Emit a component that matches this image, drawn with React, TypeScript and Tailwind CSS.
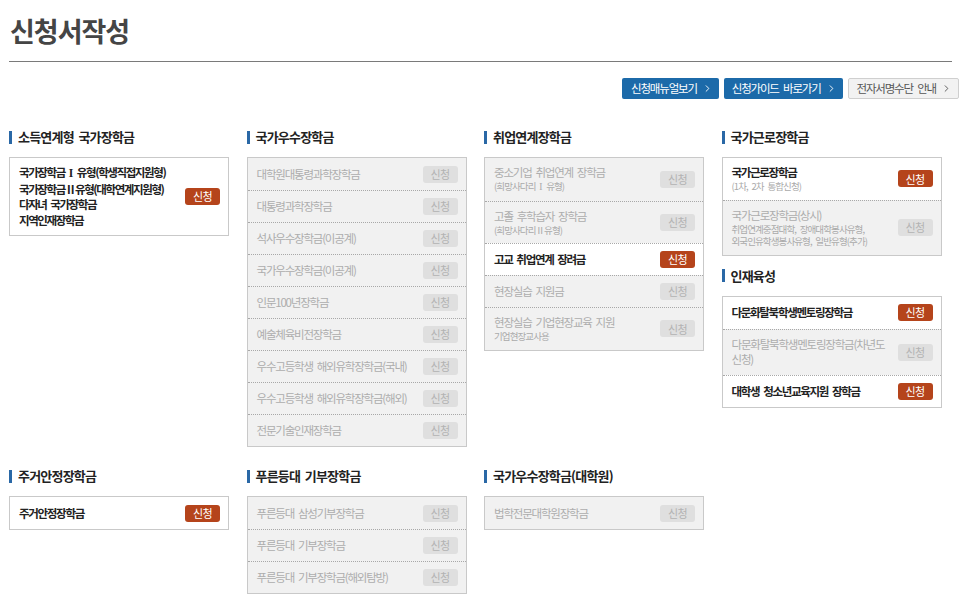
import { ChevronRight } from 'lucide-react';

type Item = {
  title: string;
  lines?: string[];
  sub?: string[];
  active?: boolean;
};

type Section = {
  name: string;
  items: Item[];
};

const col1: Section = {
  name: '소득연계형 국가장학금',
  items: [
    {
      title: '',
      lines: ['국가장학금 I 유형(학생직접지원형)', '국가장학금Ⅱ유형(대학연계지원형)', '다자녀 국가장학금', '지역인재장학금'],
      active: true,
    },
  ],
};

const col2: Section = {
  name: '국가우수장학금',
  items: [
    { title: '대학원대통령과학장학금' },
    { title: '대통령과학장학금' },
    { title: '석사우수장학금(이공계)' },
    { title: '국가우수장학금(이공계)' },
    { title: '인문100년장학금' },
    { title: '예술체육비전장학금' },
    { title: '우수고등학생 해외유학장학금(국내)' },
    { title: '우수고등학생 해외유학장학금(해외)' },
    { title: '전문기술인재장학금' },
  ],
};

const col3: Section = {
  name: '취업연계장학금',
  items: [
    { title: '중소기업 취업연계 장학금', sub: ['(희망사다리 I 유형)'] },
    { title: '고졸 후학습자 장학금', sub: ['(희망사다리Ⅱ유형)'] },
    { title: '고교 취업연계 장려금', active: true },
    { title: '현장실습 지원금' },
    { title: '현장실습 기업현장교육 지원', sub: ['기업현장교사용'] },
  ],
};

const col4a: Section = {
  name: '국가근로장학금',
  items: [
    { title: '국가근로장학금', sub: ['(1차, 2차 통합신청)'], active: true },
    {
      title: '국가근로장학금(상시)',
      sub: ['취업연계중점대학, 장애대학봉사유형,', '외국인유학생봉사유형, 일반유형(추가)'],
    },
  ],
};

const col4b: Section = {
  name: '인재육성',
  items: [
    { title: '다문화탈북학생멘토링장학금', active: true },
    { title: '', lines: ['다문화탈북학생멘토링장학금(차년도', '신청)'] },
    { title: '대학생 청소년교육지원 장학금', active: true },
  ],
};

const row2: Section[] = [
  { name: '주거안정장학금', items: [{ title: '주거안정장학금', active: true }] },
  {
    name: '푸른등대 기부장학금',
    items: [
      { title: '푸른등대 삼성기부장학금' },
      { title: '푸른등대 기부장학금' },
      { title: '푸른등대 기부장학금(해외탐방)' },
    ],
  },
  { name: '국가우수장학금(대학원)', items: [{ title: '법학전문대학원장학금' }] },
];

// roman "I" drawn in a serif face like the original page
function Text({ value }: { value: string }) {
  const parts = value.split(' I ');
  if (parts.length === 1) return <>{value}</>;
  return (
    <>
      {parts[0]} <span className="font-['Liberation_Serif',serif] tracking-normal">I</span> {parts[1]}
    </>
  );
}

function Badge({ active }: { active?: boolean }) {
  return active ? (
    <span className="flex h-[17px] w-[35px] shrink-0 items-center justify-center rounded-[3px] bg-[#b5441b] text-[11px] tracking-[-0.5px] text-white">
      신청
    </span>
  ) : (
    <span className="flex h-[17px] w-[35px] shrink-0 items-center justify-center rounded-[3px] bg-[#dfdfdf] text-[11px] tracking-[-0.5px] text-[#b3b3b3]">
      신청
    </span>
  );
}

function Row({ item, first }: { item: Item; first: boolean }) {
  return (
    <div
      className={
        (item.active ? 'bg-white ' : 'bg-[#f1f1f1] ') +
        (first ? '' : 'border-t border-dotted border-[#a8a8a8] ') +
        'flex min-h-[32px] items-center gap-[6px] py-[7px] pl-[9px] pr-[8px]'
      }
    >
      <div className="min-w-0 flex-1">
        {item.lines ? (
          item.lines.map(l => (
            <div
              key={l}
              className={
                item.active
                  ? 'whitespace-nowrap text-[11.5px] font-bold leading-[15.5px] tracking-[-1.4px] text-[#222]'
                  : 'whitespace-nowrap text-[11.5px] leading-[15.5px] tracking-[-1.2px] text-[#adadad]'
              }
            >
              <Text value={l} />
            </div>
          ))
        ) : (
          <div
            className={
              item.active
                ? 'whitespace-nowrap text-[11.5px] font-bold leading-[15px] tracking-[-1.3px] text-[#222]'
                : 'whitespace-nowrap text-[11.5px] leading-[15px] tracking-[-1.2px] text-[#adadad]'
            }
          >
            {item.title}
          </div>
        )}
        {item.sub?.map(s => (
          <div key={s} className="whitespace-nowrap text-[9.5px] leading-[12.5px] tracking-[-0.9px] text-[#aaa]">
            <Text value={s} />
          </div>
        ))}
      </div>
      <Badge active={item.active} />
    </div>
  );
}

function SectionBlock({ section }: { section: Section }) {
  return (
    <div>
      <div className="mb-[10px] flex h-[20px] items-center gap-[6px]">
        <span className="h-[13px] w-[3px] bg-[#2a68a6]" />
        <h2 className="text-[13px] font-bold tracking-[-0.8px] text-[#222]">{section.name}</h2>
      </div>
      <div className="border border-[#c9c9c9]">
        {section.items.map((item, i) => (
          <Row key={i} item={item} first={i === 0} />
        ))}
      </div>
    </div>
  );
}

export default function App() {
  return (
    <div className="min-h-[612px] bg-white px-[9px] font-['Noto_Sans_CJK_KR','Noto_Sans',sans-serif] [word-spacing:2.5px]">
      <div className="mr-[5px] border-b border-[#7a7a7a] pb-[13px] pt-[14px]">
        <h1 className="pl-[1px] text-[27px] font-bold leading-[34px] tracking-[-1px] text-[#454545]">신청서작성</h1>
      </div>

      <div className="-mr-[2px] mt-[16px] flex justify-end gap-[5px]">
        <button className="flex h-[21px] items-center gap-[5px] rounded-[2px] bg-[#1c6aa9] pl-[9px] pr-[6px] text-[11.5px] tracking-[-1.2px] text-white [word-spacing:3px]">
          신청매뉴얼보기
          <ChevronRight className="h-[11px] w-[11px]" strokeWidth={2} />
        </button>
        <button className="flex h-[21px] items-center gap-[5px] rounded-[2px] bg-[#1c6aa9] pl-[8px] pr-[6px] text-[11.5px] tracking-[-1.2px] text-white [word-spacing:3px]">
          신청가이드 바로가기
          <ChevronRight className="h-[11px] w-[11px]" strokeWidth={2} />
        </button>
        <button className="flex h-[21px] items-center gap-[5px] rounded-[2px] border border-[#cfcfcf] bg-[#f2f2f2] pl-[8px] pr-[6px] text-[11.5px] tracking-[-1.2px] text-[#555] [word-spacing:3px]">
          전자서명수단 안내
          <ChevronRight className="h-[11px] w-[11px]" strokeWidth={2} />
        </button>
      </div>

      <div className="mt-[28px] grid grid-cols-[repeat(4,220px)] items-start gap-x-[17.5px] gap-y-[19px]">
        <SectionBlock section={col1} />
        <SectionBlock section={col2} />
        <SectionBlock section={col3} />
        <div className="flex flex-col gap-[10px]">
          <SectionBlock section={col4a} />
          <SectionBlock section={col4b} />
        </div>
        {row2.map(s => (
          <SectionBlock key={s.name} section={s} />
        ))}
      </div>
    </div>
  );
}
